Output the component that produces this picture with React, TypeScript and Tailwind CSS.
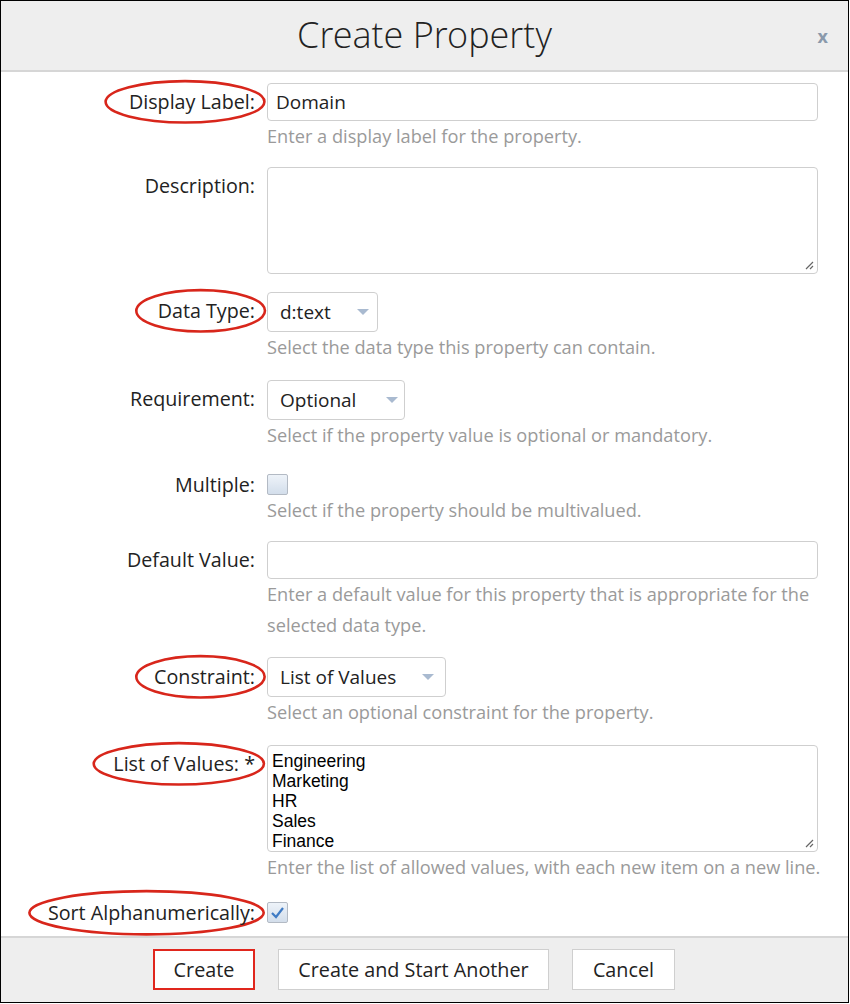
import React from "react";

const font = { fontFamily: '"Open Sans", "Liberation Sans", sans-serif' };

function Ellipse({ className }: { className: string }) {
  return (
    <svg className={`absolute pointer-events-none overflow-visible ${className}`} preserveAspectRatio="none" viewBox="0 0 100 40">
      <ellipse cx="50" cy="20" rx="49" ry="19" fill="none" stroke="#d8261b" strokeWidth="2.6" vectorEffect="non-scaling-stroke" />
    </svg>
  );
}

function Arrow() {
  return (
    <svg width="12" height="7" viewBox="0 0 12 7" className="shrink-0">
      <path d="M0 0 L12 0 L6 6 Z" fill="#a9bad0" />
    </svg>
  );
}

function Select({ value, w, gap }: { value: string; w: string; gap: string }) {
  return (
    <div className={`flex items-center h-[40px] border border-[#cfcfcf] rounded-[4px] bg-white pl-[12px] ${w}`}>
      <span className="text-[19px] text-[#222]">{value}</span>
      <span className={gap} />
      <Arrow />
    </div>
  );
}

function Checkbox({ checked }: { checked?: boolean }) {
  return (
    <div className="w-[21px] h-[21px] border border-[#b3bac4] rounded-[2px] bg-gradient-to-b from-[#eef3f9] to-[#d3deeb] flex items-center justify-center">
      {checked && (
        <svg width="15" height="13" viewBox="0 0 15 13">
          <path d="M2 7 L6 11 L13 2" fill="none" stroke="#3f7bc4" strokeWidth="2.2" />
        </svg>
      )}
    </div>
  );
}

function Hint({ children, nowrap }: { children: React.ReactNode; nowrap?: boolean }) {
  return <div className={`text-[18.2px] leading-[31px] text-[#9a9a9a] ${nowrap ? "whitespace-nowrap" : ""}`}>{children}</div>;
}

function Label({ text, ellipse }: { text: string; ellipse?: string }) {
  return (
    <div className="flex justify-end items-center h-[38px] text-[19.7px] text-[#222]">
      <span className="relative">
        {ellipse && <Ellipse className={ellipse} />}
        <span className="relative">{text}</span>
      </span>
    </div>
  );
}

export default function App() {
  return (
    <div style={font} className="w-[850px] h-[1004px] bg-white">
      <div className="w-[849px] h-[1003px] border border-black flex flex-col bg-white overflow-hidden">
        <div className="h-[71px] bg-[#eeeeee] border-b-2 border-[#d6d6d6] relative flex items-center justify-center shrink-0">
          <span className="text-[36px] font-light text-[#222] leading-none pb-[2px]" style={{ fontFamily: '"Open Sans Light", "Open Sans", sans-serif', fontWeight: 300 }}>Create Property</span>
          <span className="absolute right-[20px] top-[22px] text-[18px] font-bold text-[#8a99ab]">x</span>
        </div>
        <div className="flex-1 grid grid-cols-[254px_minmax(0,1fr)] gap-x-[12px] pr-[30px] content-start pt-[11px]">
          {/* Display Label */}
          <Label text="Display Label:" ellipse="-left-[25px] -right-[11px] -top-[7px] -bottom-[7px] w-[calc(100%+36px)] h-[calc(100%+14px)]" />
          <div className="mb-[15px]">
            <div className="h-[38px] border border-[#cfcfcf] rounded-[4px] flex items-center px-[8px] text-[19px] text-[#222]">Domain</div>
            <Hint>Enter a display label for the property.</Hint>
          </div>
          {/* Description */}
          <Label text="Description:" />
          <div className="mb-[18px]">
            <div className="h-[107px] border border-[#cfcfcf] rounded-[4px] relative">
              <svg className="absolute right-[3px] bottom-[3px]" width="9" height="9" viewBox="0 0 9 9">
                <path d="M1 8 L8 1 M5 8 L8 5" stroke="#666" strokeWidth="1.2" />
              </svg>
            </div>
          </div>
          {/* Data Type */}
          <Label text="Data Type:" ellipse="-left-[23px] -right-[11px] -top-[7px] -bottom-[7px] w-[calc(100%+34px)] h-[calc(100%+14px)]" />
          <div className="mb-[17px]">
            <Select value="d:text" w="w-[111px]" gap="w-[26px]" />
            <Hint>Select the data type this property can contain.</Hint>
          </div>
          {/* Requirement */}
          <Label text="Requirement:" />
          <div className="mb-[23px]">
            <Select value="Optional" w="w-[138px]" gap="w-[30px]" />
            <Hint>Select if the property value is optional or mandatory.</Hint>
          </div>
          {/* Multiple */}
          <div className="flex justify-end items-center h-[21px] text-[19.7px] text-[#222]">Multiple:</div>
          <div className="mb-[15px]">
            <Checkbox />
            <Hint>Select if the property should be multivalued.</Hint>
          </div>
          {/* Default Value */}
          <Label text="Default Value:" />
          <div className="mb-[16px]">
            <div className="h-[38px] border border-[#cfcfcf] rounded-[4px]" />
            <Hint>Enter a default value for this property that is appropriate for the selected data type.</Hint>
          </div>
          {/* Constraint */}
          <div className="flex justify-end items-center h-[40px] text-[19.7px] text-[#222]">
            <span className="relative">
              <Ellipse className="-left-[19px] -right-[11px] -top-[7px] -bottom-[7px] w-[calc(100%+30px)] h-[calc(100%+14px)]" />
              <span className="relative">Constraint:</span>
            </span>
          </div>
          <div className="mb-[17px]">
            <Select value="List of Values" w="w-[179px]" gap="w-[26px]" />
            <Hint>Select an optional constraint for the property.</Hint>
          </div>
          {/* List of Values */}
          <Label text="List of Values: *" ellipse="-left-[21px] -right-[11px] -top-[7px] -bottom-[7px] w-[calc(100%+32px)] h-[calc(100%+14px)]" />
          <div className="mb-[19px]">
            <div className="h-[107px] border border-[#cfcfcf] rounded-[4px] relative pl-[4px] pt-[5px] text-[17.5px] leading-[20px] text-black" style={{ fontFamily: '"Liberation Sans", Arial, sans-serif' }}>
              <div>Engineering</div>
              <div>Marketing</div>
              <div>HR</div>
              <div>Sales</div>
              <div>Finance</div>
              <svg className="absolute right-[3px] bottom-[3px]" width="9" height="9" viewBox="0 0 9 9">
                <path d="M1 8 L8 1 M5 8 L8 5" stroke="#666" strokeWidth="1.2" />
              </svg>
            </div>
            <Hint nowrap>Enter the list of allowed values, with each new item on a new line.</Hint>
          </div>
          {/* Sort */}
          <div className="flex justify-end items-center h-[21px] text-[19.7px] text-[#222]">
            <span className="relative">
              <Ellipse className="-left-[21px] -right-[11px] -top-[8px] -bottom-[8px] w-[calc(100%+32px)] h-[calc(100%+16px)]" />
              <span className="relative">Sort Alphanumerically:</span>
            </span>
          </div>
          <div>
            <Checkbox checked />
          </div>
        </div>
        <div className="h-[66px] shrink-0 bg-[#eeeeee] border-t-2 border-[#d6d6d6] flex items-start justify-center gap-[23px] pt-[11px] pr-[21px] text-[19.8px] text-[#222]">
          <div className="h-[41px] w-[102px] bg-white border-2 border-[#e0261d] flex items-center justify-center">Create</div>
          <div className="h-[41px] w-[271px] bg-white border border-[#cfcfcf] flex items-center justify-center">Create and Start Another</div>
          <div className="h-[41px] w-[103px] bg-white border border-[#cfcfcf] flex items-center justify-center">Cancel</div>
        </div>
      </div>
    </div>
  );
}
